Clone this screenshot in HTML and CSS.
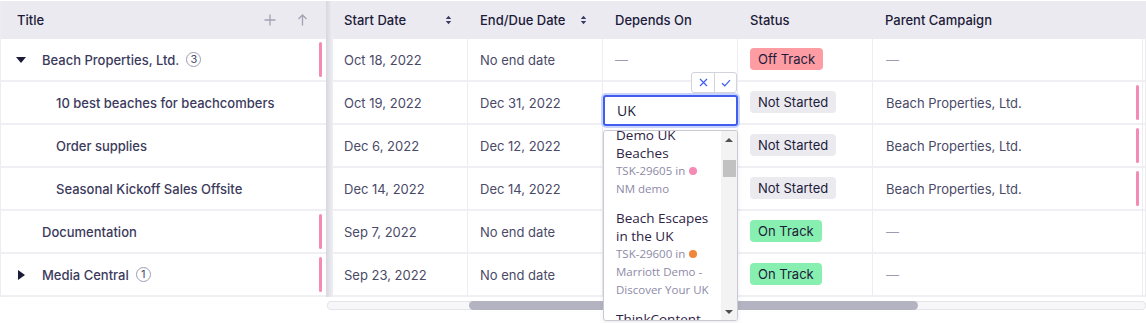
FILE: index.html
```html
<!DOCTYPE html>
<html lang="en">
<head>
<meta charset="utf-8">
<title>Campaign tasks</title>
<link rel="stylesheet" href="styles.css">
</head>
<body>
<div class="grid">
  <div class="body">
    <div class="frozen">
      <div class="hcell title-h">
        <span>Title</span>
        <span class="h-actions">
          <svg class="ico" width="12" height="12" viewBox="0 0 12 12"><path d="M6 0.5V11.5M0.5 6H11.5" stroke="#a3a2b6" stroke-width="1.3" fill="none"/></svg>
          <svg class="ico" width="11" height="12" viewBox="0 0 11 12"><path d="M5.5 11.5V1M1.5 5L5.5 1L9.5 5" stroke="#a3a2b6" stroke-width="1.3" fill="none"/></svg>
        </span>
      </div>
      <div class="lrow">
        <span class="caret"><span class="tri-down"></span></span>
        <span class="name">Beach Properties, Ltd.</span><span class="count">3</span>
        <span class="flag"></span>
      </div>
      <div class="lrow child"><span class="name">10 best beaches for beachcombers</span></div>
      <div class="lrow child"><span class="name">Order supplies</span></div>
      <div class="lrow child"><span class="name">Seasonal Kickoff Sales Offsite</span></div>
      <div class="lrow">
        <span class="caret"></span>
        <span class="name">Documentation</span>
        <span class="flag"></span>
      </div>
      <div class="lrow">
        <span class="caret"><span class="tri-right"></span></span>
        <span class="name">Media Central</span><span class="count">1</span>
        <span class="flag"></span>
      </div>
    </div>
    <div class="shadow"></div>
    <div class="scroll">
      <div class="hrow">
        <div class="hc first"><span>Start Date</span><svg width="7" height="10" viewBox="0 0 7 10"><path d="M0.8 4L3.5 0.8L6.2 4Z M0.8 6L3.5 9.2L6.2 6Z" fill="#3b3a63"/></svg></div>
        <div class="hc"><span>End/Due Date</span><svg width="7" height="10" viewBox="0 0 7 10"><path d="M0.8 4L3.5 0.8L6.2 4Z M0.8 6L3.5 9.2L6.2 6Z" fill="#3b3a63"/></svg></div>
        <div class="hc"><span>Depends On</span></div>
        <div class="hc"><span>Status</span></div>
        <div class="hc"><span>Parent Campaign</span></div>
        <div class="hc rest"></div>
      </div>
      <div class="row">
        <div class="c first">Oct 18, 2022</div>
        <div class="c">No end date</div>
        <div class="c dash">—</div>
        <div class="c"><span class="status off">Off Track</span></div>
        <div class="c dash pc">—</div>
        <div class="c rest"></div>
      </div>
      <div class="row">
        <div class="c first">Oct 19, 2022</div>
        <div class="c">Dec 31, 2022</div>
        <div class="c editing">
          <div class="editor">
            <div class="ed-btns">
              <span class="ed-btn"><svg width="9" height="9" viewBox="0 0 9 9"><path d="M1 1L8 8M8 1L1 8" stroke="#3d5cf5" stroke-width="1.2" fill="none"/></svg></span>
              <span class="ed-btn"><svg width="10" height="8" viewBox="0 0 10 8"><path d="M1 4.2L3.8 6.8L9 1.2" stroke="#3d5cf5" stroke-width="1.2" fill="none"/></svg></span>
            </div>
            <div class="ed-input">UK</div>
            <div class="ed-list">
              <div class="ed-items">
                <div class="item">
                  <div class="it-title">Demo UK<br>Beaches</div>
                  <div class="it-sub">TSK-29605 in <span class="dot pink"></span><br>NM demo</div>
                </div>
                <div class="item">
                  <div class="it-title">Beach Escapes<br>in the UK</div>
                  <div class="it-sub">TSK-29600 in <span class="dot orange"></span><br>Marriott Demo -<br>Discover Your UK</div>
                </div>
                <div class="item">
                  <div class="it-title">ThinkContent</div>
                </div>
              </div>
              <div class="vscroll">
                <span class="arr"><span class="tri-up-s"></span></span>
                <span class="vthumb"></span>
                <span class="arr bottom"><span class="tri-down-s"></span></span>
              </div>
            </div>
          </div>
        </div>
        <div class="c"><span class="status none">Not Started</span></div>
        <div class="c pc">Beach Properties, Ltd.<span class="flag"></span></div>
        <div class="c rest"></div>
      </div>
      <div class="row">
        <div class="c first">Dec 6, 2022</div>
        <div class="c">Dec 12, 2022</div>
        <div class="c"></div>
        <div class="c"><span class="status none">Not Started</span></div>
        <div class="c pc">Beach Properties, Ltd.<span class="flag"></span></div>
        <div class="c rest"></div>
      </div>
      <div class="row">
        <div class="c first">Dec 14, 2022</div>
        <div class="c">Dec 14, 2022</div>
        <div class="c"></div>
        <div class="c"><span class="status none">Not Started</span></div>
        <div class="c pc">Beach Properties, Ltd.<span class="flag"></span></div>
        <div class="c rest"></div>
      </div>
      <div class="row">
        <div class="c first">Sep 7, 2022</div>
        <div class="c">No end date</div>
        <div class="c"></div>
        <div class="c"><span class="status on">On Track</span></div>
        <div class="c dash pc">—</div>
        <div class="c rest"></div>
      </div>
      <div class="row">
        <div class="c first">Sep 23, 2022</div>
        <div class="c">No end date</div>
        <div class="c"></div>
        <div class="c"><span class="status on">On Track</span></div>
        <div class="c dash pc">—</div>
        <div class="c rest"></div>
      </div>
    </div>
  </div>
  <div class="hscroll"><span class="hthumb"></span></div>
</div>
</body>
</html>
```

FILE: styles.css
```css
* { box-sizing: border-box; }
html, body { margin: 0; padding: 0; background: #fff; }
body {
  font-family: Inter, "Noto Sans", sans-serif;
  font-size: 13px;
  color: #4a4a68;
  min-height: 323px;
  overflow: hidden;
}
.grid { padding-top: 1px; min-height: 323px; }
.body { display: flex; }
.frozen {
  width: 326px;
  flex: none;
  border-left: 1px solid #ececf1;
}
.hcell, .hrow {
  height: 38px;
  background: #ebeaf0;
  color: #1c1b3a;
  font-weight: 500;
}
.title-h {
  display: flex;
  align-items: center;
  justify-content: space-between;
  padding: 0 18px 0 16px;
}
.h-actions { display: flex; align-items: center; gap: 21px; }
.ico { display: block; }
.lrow {
  height: 43px;
  border-bottom: 2px solid #f0eff4;
  display: flex;
  align-items: center;
  padding-left: 15px;
  color: #3b3a5c;
  font-weight: 500;
}
.lrow.child { padding-left: 55px; }
.caret { width: 26px; flex: none; display: flex; align-items: center; }
.tri-down {
  width: 0; height: 0;
  border-left: 5px solid transparent;
  border-right: 5px solid transparent;
  border-top: 6px solid #1c1b3a;
  margin-top: 1px;
}
.tri-right {
  width: 0; height: 0;
  border-top: 5px solid transparent;
  border-bottom: 5px solid transparent;
  border-left: 7px solid #1c1b3a;
  margin-left: 2px;
}
.count {
  width: 15px; height: 15px;
  margin-left: 7px;
  border: 1px solid #9e9cb3;
  border-radius: 50%;
  font-size: 11px;
  font-weight: 400;
  color: #4b4a66;
  display: flex;
  align-items: center;
  justify-content: center;
  line-height: 1;
}
.flag {
  margin-left: auto;
  margin-right: 4px;
  width: 3px;
  height: 35px;
  border-radius: 2px;
  background: #f48ab5;
  align-self: flex-start;
  margin-top: 3px;
}
.shadow {
  width: 7px;
  flex: none;
  background: linear-gradient(to right, #d8d7df, #efeff3);
}
.scroll { flex: 1; min-width: 0; }
.hrow, .row {
  display: grid;
  grid-template-columns: 135px 135px 135px 135px 270px 1fr;
}
.hc {
  display: flex;
  align-items: center;
  justify-content: space-between;
  padding: 0 16px 0 12px;
}
.hc.first { padding-left: 11px; }
.row { height: 43px; }
.c {
  border-bottom: 2px solid #f0eff4;
  border-right: 1px solid #ececf1;
  display: flex;
  align-items: center;
  padding-left: 12px;
}
.c.first { padding-left: 11px; }
.c.pc { padding-left: 13px; }
.c.rest { padding: 0; }
.dash { color: #9d9cae; }
.c .flag { margin-right: 3px; }
.status {
  height: 22px;
  padding: 0 8px;
  border-radius: 4px;
  display: flex;
  align-items: center;
  color: #1c1b3a;
  font-weight: 400;
  margin-top: -2px;
}
.status.off { background: #fd9ca3; }
.status.none { background: #ebeaef; }
.status.on { background: #87efaf; }

.editing { position: relative; padding: 0; }
.editor {
  position: absolute;
  left: 0;
  top: -10px;
  width: 135px;
  z-index: 10;
  display: flex;
  flex-direction: column;
  font-family: "Open Sans", "Noto Sans", sans-serif;
}
.ed-btns {
  align-self: flex-end;
  display: flex;
  height: 21px;
  margin-right: 1px;
  border: 1px solid #d3d3de;
  border-radius: 3px;
  background: #fff;
}
.ed-btn {
  width: 22px;
  display: flex;
  align-items: center;
  justify-content: center;
}
.ed-btn + .ed-btn { border-left: 1px solid #d3d3de; }
.ed-input {
  margin-top: 2px;
  height: 31px;
  border: 2px solid #3f5ef0;
  border-radius: 3px;
  box-shadow: 0 0 0 2px #c9d3fb;
  background: #fff;
  padding-left: 12px;
  display: flex;
  align-items: center;
  font-size: 14px;
  color: #1c1b3a;
}
.ed-list {
  margin-top: 4px;
  height: 191px;
  border: 1px solid #c9c8d3;
  border-radius: 3px;
  background: #fff;
  box-shadow: 0 2px 5px rgba(30, 28, 60, 0.08);
  display: flex;
  overflow: hidden;
}
.ed-items { flex: 1; min-width: 0; overflow: hidden; }
.item {
  padding: 5px 0 6px 12px;
  white-space: nowrap;
  line-height: 18px;
}
.item:first-child { margin-top: -10px; }
.it-title { font-size: 13.5px; color: #2e2346; }
.it-sub { font-size: 11.5px; color: #8d8aa8; }
.dot {
  display: inline-block;
  width: 8px; height: 8px;
  border-radius: 50%;
  margin-left: 1px;
}
.dot.pink { background: #f48ab5; }
.dot.orange { background: #f0873a; }
.vscroll {
  width: 16px;
  flex: none;
  background: #f3f3f3;
  display: flex;
  flex-direction: column;
  align-items: center;
}
.arr {
  height: 17px;
  width: 16px;
  display: flex;
  align-items: center;
  justify-content: center;
}
.arr.bottom { margin-top: auto; }
.tri-up-s {
  width: 0; height: 0;
  border-left: 4px solid transparent;
  border-right: 4px solid transparent;
  border-bottom: 4px solid #505050;
}
.tri-down-s {
  width: 0; height: 0;
  border-left: 4px solid transparent;
  border-right: 4px solid transparent;
  border-top: 4px solid #505050;
}
.vthumb {
  margin-top: 12px;
  width: 13px;
  height: 17px;
  background: #c1c1c1;
}
.hscroll {
  margin-left: 327px;
  margin-top: 4px;
  height: 9px;
  border-radius: 5px;
  background: #f7f7f9;
  box-shadow: inset 0 0 0 1px #e4e4ea;
  display: flex;
}
.hthumb {
  margin-left: 142px;
  width: 449px;
  height: 9px;
  border-radius: 5px;
  background: #b4b3c1;
}
```
